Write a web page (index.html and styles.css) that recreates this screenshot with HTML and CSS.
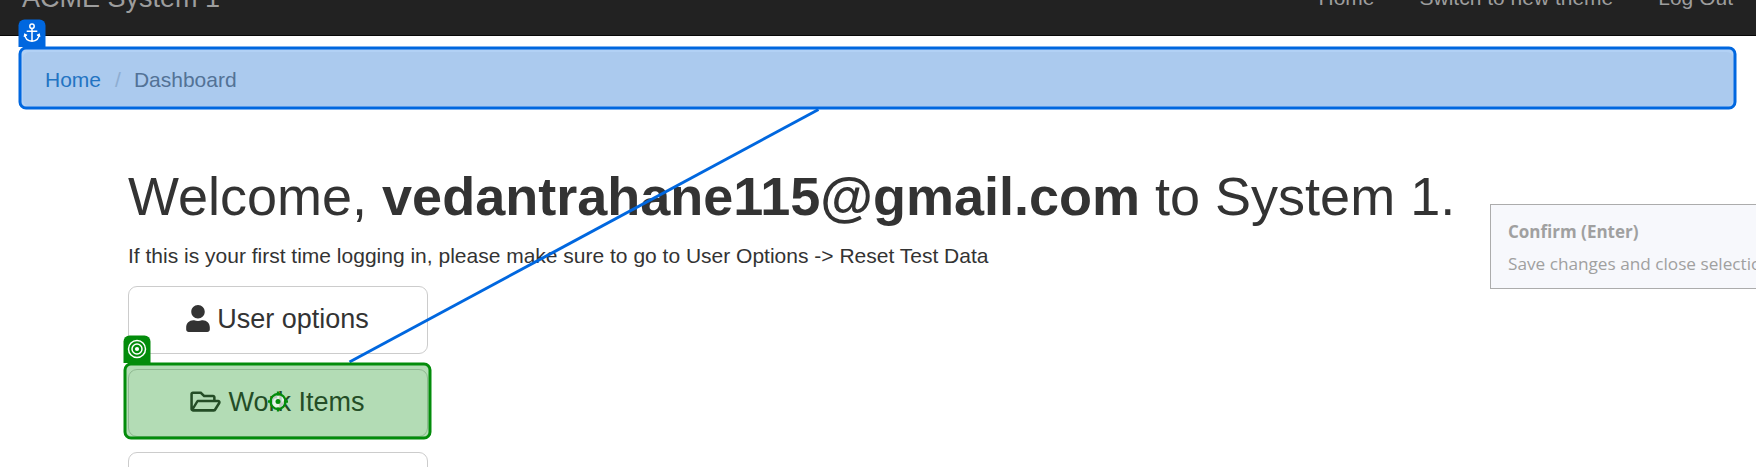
FILE: index.html
```html
<!DOCTYPE html>
<html lang="en">
<head>
<meta charset="utf-8">
<title>ACME System 1 - Dashboard</title>
<link rel="stylesheet" href="styles.css">
</head>
<body>
<nav class="navbar">
  <a class="brand">ACME System 1</a>
  <div class="nav-links"><a>Home</a><a>Switch to new theme</a><a>Log Out</a></div>
</nav>
<ol class="breadcrumb">
  <li><a class="crumb-link">Home</a></li>
  <li class="separator">/</li>
  <li class="current">Dashboard</li>
</ol>
<main class="container">
  <h1 class="title">Welcome, <strong>vedantrahane115@gmail.com</strong> to System 1.</h1>
  <p class="hint">If this is your first time logging in, please make sure to go to User Options -&gt; Reset Test Data</p>
  <div class="buttons">
    <button class="btn"><svg class="icon-user" viewBox="0 0 448 512"><path fill="currentColor" d="M224 256c70.7 0 128-57.3 128-128S294.7 0 224 0 96 57.3 96 128s57.3 128 128 128zm89.6 32h-16.7c-22.2 10.2-46.9 16-72.9 16s-50.6-5.8-72.9-16h-16.7C60.2 288 0 348.2 0 422.4V464c0 26.5 21.5 48 48 48h352c26.5 0 48-21.5 48-48v-41.6c0-74.2-60.2-134.4-134.4-134.4z"/></svg><span>User options</span></button>
    <button class="btn"><svg class="icon-folder" viewBox="0 0 576 512"><path fill="currentColor" d="M527.9 224H480v-48c0-26.5-21.5-48-48-48H272l-64-64H48C21.5 64 0 85.5 0 112v288c0 26.5 21.5 48 48 48h400c16.5 0 31.9-8.5 40.7-22.6l79.9-128c20-31.9-3-73.4-40.7-73.4zM48 118c0-3.3 2.7-6 6-6h134.1l64 64H426c3.3 0 6 2.7 6 6v42H152c-16.8 0-32.4 8.8-41.1 23.2L48 351.4zm400 282H72l77.2-128H528z"/></svg><span>Work Items</span></button>
    <button class="btn"></button>
  </div>
</main>
<svg class="overlay" viewBox="0 0 1756 467">
  <path class="anchor-tab" d="M18.500 47V25.500a6 6 0 0 1 6-6H39.500a6 6 0 0 1 6 6V47z"/>
  <rect class="anchor-box" x="20" y="48" width="1715" height="60" rx="6"/>
  <g class="anchor-icon">
    <circle cx="32" cy="26.300" r="2.200"/>
    <path d="M32 28.500V41M26.700 31.200H37.300M24.800 34.300C25 38.500 28 41 32 41.300C36 41 39 38.500 39.200 34.300M24.300 36.800L24.800 34.300L27 35.500M39.700 36.800L39.200 34.300L37 35.500"/>
  </g>
  <path class="connector" d="M818.500 109.500L349.500 362"/>
  <path class="target-tab" d="M123.500 363V341.500a6 6 0 0 1 6-6H144.500a6 6 0 0 1 6 6V363z"/>
  <rect class="target-box" x="125" y="364" width="305" height="74" rx="6"/>
  <g class="target-icon">
    <circle cx="137" cy="349" r="8.500"/>
    <circle cx="137" cy="349" r="5"/>
    <circle class="dot" cx="137" cy="349" r="2.100"/>
  </g>
  <g class="pointer">
    <circle class="ring" cx="278" cy="401.500" r="7.500"/>
    <path d="M278 391.500v4M278 407.500v4M268 401.500h4M284 401.500h4"/>
    <circle class="center" cx="278" cy="401.500" r="2.500"/>
  </g>
</svg>
<aside class="tooltip"><strong class="tooltip-title">Confirm (Enter)</strong><span class="tooltip-text">Save changes and close selection</span></aside>
</body>
</html>
```
FILE: styles.css
```css
* { box-sizing: border-box; }
body {
  position: relative;
  margin: 0;
  height: 467px;
  overflow: hidden;
  background: #fff;
  color: #333;
  font: 21px/30px "Liberation Sans", Arial, sans-serif;
}
.navbar {
  display: flex;
  justify-content: space-between;
  height: 36px;
  padding: 0 23px 0 22px;
  background: #222;
  border-bottom: 1px solid #080808;
  color: #9d9d9d;
}
.brand { font-size: 27px; margin-top: -17px; }
.nav-links { display: flex; gap: 45px; margin-top: -17px; }
.breadcrumb {
  display: flex;
  height: 54px;
  margin: 16px 23px 0;
  padding: 13px 22px 11px;
  border-radius: 6px;
  background: #f5f5f5;
  color: #777;
  list-style: none;
}
.crumb-link { color: #337ab7; }
.separator { padding: 0 13px 0 14px; color: #ccc; }
.container { padding: 61px 128px 0; }
.title { margin: 0; font-size: 54px; line-height: 59px; font-weight: 400; white-space: nowrap; }
.hint { margin: 15px 0 0; }
.buttons { display: flex; flex-direction: column; gap: 15px; width: 300px; margin-top: 15px; }
.btn {
  display: flex;
  align-items: center;
  justify-content: center;
  gap: 7px;
  height: 68px;
  flex: none;
  padding: 0 1px 3px 0;
  border: 1px solid #ccc;
  border-radius: 9px;
  background: #fff;
  color: #333;
  font: 27px/36px "Liberation Sans", Arial, sans-serif;
}
.icon-user { width: 24px; height: 27px; margin-bottom: 1px; }
.icon-folder { width: 31px; height: 27px; }
.overlay { position: absolute; left: 0; top: 0; width: 1756px; height: 467px; }
.anchor-box { fill: rgba(0, 103, 223, .3); stroke: #0067df; stroke-width: 3; }
.anchor-tab { fill: #0067df; }
.anchor-icon { fill: none; stroke: #fff; stroke-width: 1.5; }
.connector { stroke: #0067df; stroke-width: 3; }
.target-box { fill: rgba(3, 140, 11, .3); stroke: #038c0b; stroke-width: 3; }
.target-tab { fill: #038c0b; }
.target-icon { fill: none; stroke: #fff; stroke-width: 1.5; }
.target-icon .dot { fill: #fff; stroke: none; }
.pointer { fill: none; stroke: #038c0b; stroke-width: 2.3; }
.pointer .ring { fill: rgba(255, 255, 255, .7); }
.pointer .center { fill: #038c0b; stroke: none; }
.tooltip {
  position: absolute;
  left: 1490px;
  top: 204px;
  width: 290px;
  height: 85px;
  padding: 11px 17px;
  border: 1px solid #acacac;
  background: #f7f8fc;
  color: #a0a0a0;
  font: 17.2px/32px "Open Sans", "Noto Sans", sans-serif;
  white-space: nowrap;
}
.tooltip-title, .tooltip-text { display: block; }
.tooltip-title { font-size: 17px; }
```
